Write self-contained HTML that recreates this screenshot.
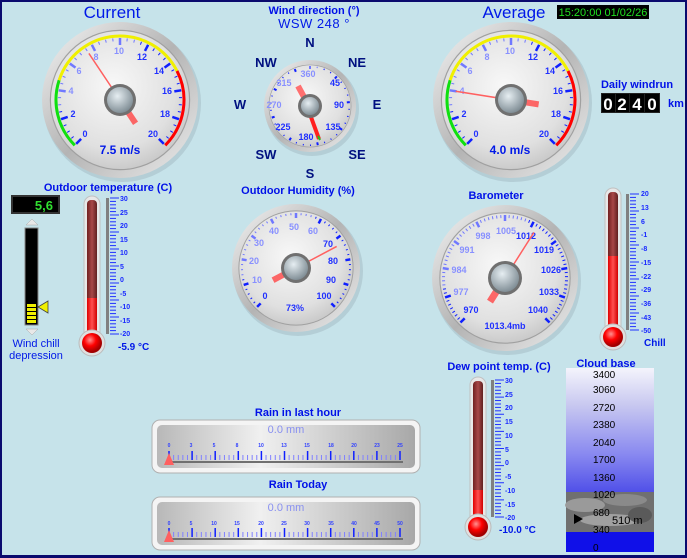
<!DOCTYPE html>
<html><head><meta charset="utf-8">
<style>
html,body{margin:0;padding:0}
body{width:687px;height:558px;overflow:hidden;background:#0a0a6e;font-family:"Liberation Sans",sans-serif}
#f{position:absolute;left:2px;top:2px;width:683px;height:553px;background:#c6e3ea}
svg{position:absolute;left:0;top:0}
.b{font-weight:bold;font-size:11px;fill:#0010e8}
.t{font-size:17px;fill:#0018e8}
.l{font-size:9px;font-weight:bold;fill:#2030ff;text-anchor:middle}
.lf{fill:#8890ff}
.s{font-size:7px;font-weight:bold;fill:#1a2aff}
.c{font-size:13px;font-weight:bold;fill:#001080;text-anchor:middle}
</style></head><body>
<div id="f"></div>
<svg width="687" height="558" viewBox="0 0 687 558" id="sv">
<defs>
<radialGradient id="face" cx="45%" cy="40%" r="65%"><stop offset="0" stop-color="#f8f8f8"/><stop offset="0.7" stop-color="#e0e0e0"/><stop offset="1" stop-color="#c4c4c4"/></radialGradient>
<linearGradient id="bez" x1="0" y1="0" x2="1" y2="1"><stop offset="0" stop-color="#f4f4f4"/><stop offset="0.5" stop-color="#b4b4b4"/><stop offset="1" stop-color="#ececec"/></linearGradient>
<radialGradient id="hub" cx="40%" cy="35%" r="70%"><stop offset="0" stop-color="#e6eef2"/><stop offset="1" stop-color="#7a8890"/></radialGradient>
<linearGradient id="tube" x1="0" x2="1"><stop offset="0" stop-color="#702020"/><stop offset="0.5" stop-color="#a84848"/><stop offset="1" stop-color="#602020"/></linearGradient>
<linearGradient id="tubef" x1="0" x2="1"><stop offset="0" stop-color="#e00000"/><stop offset="0.5" stop-color="#ff5050"/><stop offset="1" stop-color="#d00000"/></linearGradient>
<radialGradient id="bulb" cx="40%" cy="35%" r="60%"><stop offset="0" stop-color="#ff9090"/><stop offset="0.5" stop-color="#ff0000"/><stop offset="1" stop-color="#a00000"/></radialGradient>
<linearGradient id="cloud" x1="0" y1="0" x2="0" y2="1"><stop offset="0" stop-color="#f4f4fc"/><stop offset="0.3" stop-color="#c8c8f0"/><stop offset="0.7" stop-color="#8888f0"/><stop offset="1" stop-color="#5050e8"/></linearGradient>
<linearGradient id="rainf" x1="0" x2="1"><stop offset="0" stop-color="#b8b8b8"/><stop offset="0.4" stop-color="#f0f0f0"/><stop offset="1" stop-color="#a8a8a8"/></linearGradient>
</defs>
<g id="dyn"></g>

<text class="t" x="112" y="18" text-anchor="middle">Current</text>
<text class="t" x="514" y="18" text-anchor="middle">Average</text>
<rect x="557" y="5" width="92" height="14" fill="#000"/>
<text x="603" y="16" font-size="11" fill="#20e020" text-anchor="middle">15:20:00 01/02/26</text>
<text class="b" x="314" y="14" text-anchor="middle">Wind direction (°)</text>
<text x="314" y="28" font-size="13" fill="#0018e8" text-anchor="middle" letter-spacing="0.5">WSW  248 °</text>

<text class="c" x="310" y="47">N</text><text class="c" x="357" y="67">NE</text><text class="c" x="377" y="109">E</text><text class="c" x="357" y="159">SE</text>
<text class="c" x="310" y="178">S</text><text class="c" x="266" y="159">SW</text><text class="c" x="240" y="109">W</text><text class="c" x="266" y="67">NW</text>

<text class="b" x="637" y="88" text-anchor="middle">Daily windrun</text>
<rect x="601" y="93" width="59" height="20" fill="#222"/>
<g font-size="17" font-weight="bold" fill="#fff" text-anchor="middle">
<rect x="602" y="94" width="13" height="18" fill="#000"/><rect x="616" y="94" width="13" height="18" fill="#000"/><rect x="630" y="94" width="14" height="18" fill="#000"/><rect x="645" y="94" width="14" height="18" fill="#000"/>
<text x="608" y="110">0</text><text x="622" y="110">2</text><text x="637" y="110">4</text><text x="652" y="110">0</text></g>
<text class="b" x="668" y="107">km</text>

<text class="b" x="108" y="191" text-anchor="middle">Outdoor temperature (C)</text>
<text class="b" x="298" y="194" text-anchor="middle">Outdoor Humidity (%)</text>
<text class="b" x="496" y="199" text-anchor="middle">Barometer</text>
<text class="b" x="499" y="370" text-anchor="middle">Dew point temp. (C)</text>
<text class="b" x="606" y="367" text-anchor="middle">Cloud base</text>
<text class="b" x="298" y="416" text-anchor="middle">Rain in last hour</text>
<text class="b" x="298" y="488" text-anchor="middle">Rain Today</text>

<rect x="11" y="195" width="49" height="19" fill="#333"/><rect x="13" y="197" width="45" height="15" fill="#000"/>
<text x="53" y="210" font-size="13" font-weight="bold" fill="#30e030" text-anchor="end">5,6</text>
<polygon points="26,225 38,225 32,219" fill="#e8e8e8" stroke="#aaa" stroke-width="0.5"/>
<rect x="25" y="228" width="13" height="97" fill="#000" stroke="#888"/>
<g fill="#f0f000"><rect x="27" y="304" width="9" height="3"/><rect x="27" y="308" width="9" height="3"/><rect x="27" y="312" width="9" height="3"/><rect x="27" y="316" width="9" height="3"/><rect x="27" y="320" width="9" height="3"/></g>
<polygon points="38,307 48,301 48,313" fill="#f0f000" stroke="#444" stroke-width="0.8"/>
<polygon points="26,329 38,329 32,335" fill="#e8e8e8" stroke="#aaa" stroke-width="0.5"/>
<text x="36" y="347" font-size="11" fill="#0018e8" text-anchor="middle">Wind chill</text>
<text x="36" y="359" font-size="11" fill="#0018e8" text-anchor="middle">depression</text>

<text x="118" y="350" font-size="10" font-weight="bold" fill="#0018e8">-5.9 °C</text>
<text x="499" y="533" font-size="10" font-weight="bold" fill="#0018e8">-10.0 °C</text>
<text x="644" y="346" font-size="10" font-weight="bold" fill="#0018e8">Chill</text>

<rect x="566" y="368" width="88" height="124" fill="url(#cloud)"/>
<rect x="566" y="492" width="88" height="40" fill="#707070"/>
<ellipse cx="585" cy="505" rx="20" ry="7" fill="#9a9a9a"/><ellipse cx="625" cy="500" rx="22" ry="6" fill="#8a8a8a"/><ellipse cx="610" cy="520" rx="30" ry="6" fill="#a0a0a0"/><ellipse cx="640" cy="515" rx="12" ry="8" fill="#5a5a5a"/>
<rect x="566" y="532" width="88" height="20" fill="#1010e8"/>
<g font-size="10" fill="#000">
<text x="593" y="378">3400</text><text x="593" y="393">3060</text><text x="593" y="411">2720</text><text x="593" y="428">2380</text><text x="593" y="446">2040</text><text x="593" y="463">1700</text><text x="593" y="481">1360</text><text x="593" y="498">1020</text><text x="593" y="516">680</text><text x="593" y="533">340</text><text x="593" y="551">0</text>
<text x="612" y="524" font-size="11">510 m</text></g>
<polygon points="574,514 583,519 574,524" fill="#000"/>

<g id="rainbars"></g>
<text x="286" y="433" font-size="11" fill="#8890f0" text-anchor="middle">0.0 mm</text>
<text x="286" y="511" font-size="11" fill="#8890f0" text-anchor="middle">0.0 mm</text>
<g font-size="5" fill="#3040ff" font-weight="bold" text-anchor="middle">
<text x="169" y="447">0</text><text x="191" y="447">3</text><text x="214" y="447">5</text><text x="237" y="447">8</text><text x="261" y="447">10</text><text x="284" y="447">13</text><text x="307" y="447">15</text><text x="331" y="447">18</text><text x="354" y="447">20</text><text x="377" y="447">23</text><text x="400" y="447">25</text>
<text x="169" y="525">0</text><text x="191" y="525">5</text><text x="214" y="525">10</text><text x="237" y="525">15</text><text x="261" y="525">20</text><text x="284" y="525">25</text><text x="307" y="525">30</text><text x="331" y="525">35</text><text x="354" y="525">40</text><text x="377" y="525">45</text><text x="400" y="525">50</text></g>

<g class="l" font-size="10">
<text x="85" y="137">0</text><text x="73" y="117">2</text><text x="71" y="94" class="l lf">4</text><text x="79" y="74" class="l lf">6</text><text x="96" y="60" class="l lf">8</text><text x="119" y="54" class="l lf">10</text><text x="142" y="60">12</text><text x="159" y="74">14</text><text x="167" y="94">16</text><text x="165" y="117">18</text><text x="153" y="137">20</text>
<text x="476" y="137">0</text><text x="464" y="117">2</text><text x="462" y="94" class="l lf">4</text><text x="470" y="74" class="l lf">6</text><text x="487" y="60" class="l lf">8</text><text x="510" y="54" class="l lf">10</text><text x="533" y="60">12</text><text x="550" y="74">14</text><text x="558" y="94">16</text><text x="556" y="117">18</text><text x="544" y="137">20</text>
</g>
<text x="120" y="154" font-size="12" font-weight="bold" fill="#0018e8" text-anchor="middle">7.5 m/s</text>
<text x="510" y="154" font-size="12" font-weight="bold" fill="#0018e8" text-anchor="middle">4.0 m/s</text>
<g class="l" font-size="8">
<text x="308" y="77" class="l lf">360</text><text x="335" y="86">45</text><text x="339" y="108">90</text><text x="333" y="130">135</text><text x="306" y="140">180</text><text x="283" y="130">225</text><text x="274" y="108" class="l lf">270</text><text x="284" y="86" class="l lf">315</text>
</g>
<g class="l" font-size="8">
<text x="265" y="299">0</text><text x="257" y="283" class="l lf">10</text><text x="254" y="264" class="l lf">20</text><text x="259" y="246" class="l lf">30</text><text x="274" y="234" class="l lf">40</text><text x="294" y="230" class="l lf">50</text><text x="313" y="234" class="l lf">60</text><text x="328" y="247">70</text><text x="333" y="264">80</text><text x="331" y="283">90</text><text x="324" y="299">100</text>
<text x="295" y="311">73%</text>
</g>
<g class="l" font-size="8">
<text x="471" y="313">970</text><text x="461" y="295" class="l lf">977</text><text x="459" y="273" class="l lf">984</text><text x="467" y="253" class="l lf">991</text><text x="483" y="239" class="l lf">998</text><text x="506" y="234" class="l lf">1005</text><text x="526" y="239">1012</text><text x="544" y="253">1019</text><text x="551" y="273">1026</text><text x="549" y="295">1033</text><text x="538" y="313">1040</text>
<text x="505" y="329">1013.4mb</text>
</g>
<g class="s">
<text x="120" y="201">30</text><text x="120" y="215">25</text><text x="120" y="228">20</text><text x="120" y="242">15</text><text x="120" y="255">10</text><text x="120" y="269">5</text><text x="120" y="282">0</text><text x="120" y="296">-5</text><text x="120" y="309">-10</text><text x="120" y="323">-15</text><text x="120" y="336">-20</text>
<text x="641" y="196">20</text><text x="641" y="210">13</text><text x="641" y="224">6</text><text x="641" y="237">-1</text><text x="641" y="251">-8</text><text x="641" y="265">-15</text><text x="641" y="279">-22</text><text x="641" y="292">-29</text><text x="641" y="306">-36</text><text x="641" y="320">-43</text><text x="641" y="333">-50</text>
<text x="505" y="383">30</text><text x="505" y="397">25</text><text x="505" y="410">20</text><text x="505" y="424">15</text><text x="505" y="438">10</text><text x="505" y="452">5</text><text x="505" y="465">0</text><text x="505" y="479">-5</text><text x="505" y="493">-10</text><text x="505" y="507">-15</text><text x="505" y="520">-20</text>
</g>
<g id="top"></g>
</svg>
<script>
var NS="http://www.w3.org/2000/svg",D=document.getElementById("dyn"),T=document.getElementById("top"),R=document.getElementById("rainbars");
function el(p,n,a){var e=document.createElementNS(NS,n);for(var k in a)e.setAttribute(k,a[k]);p.appendChild(e);return e;}
function pt(cx,cy,r,a){a=a*Math.PI/180;return [cx+r*Math.sin(a),cy-r*Math.cos(a)];}
function arc(cx,cy,r,a1,a2){var p=pt(cx,cy,r,a1),q=pt(cx,cy,r,a2);return "M"+p[0]+" "+p[1]+"A"+r+" "+r+" 0 "+((a2-a1)>180?1:0)+" 1 "+q[0]+" "+q[1];}
function bezel(cx,cy,r){
 el(D,"circle",{cx:cx+2,cy:cy+3,r:r+1,fill:"#a8c0c8",opacity:0.6});
 el(D,"circle",{cx:cx,cy:cy,r:r,fill:"url(#bez)"});
 el(D,"circle",{cx:cx,cy:cy,r:r*0.9,fill:"#a0a0a0"});
 el(D,"circle",{cx:cx,cy:cy,r:r*0.885,fill:"url(#face)"});}
function ticks(cx,cy,r1,n,a0,sw,majEvery,majLen,minLen,col,mw){
 for(var i=0;i<=n;i++){var a=a0+sw*i/n,maj=i%majEvery==0;var p=pt(cx,cy,r1,a),q=pt(cx,cy,r1-(maj?majLen:minLen),a);
 var c=(a>-100&&a<20)?"#7078ff":col;
 el(D,"line",{x1:p[0],y1:p[1],x2:q[0],y2:q[1],stroke:c,"stroke-width":maj?(mw||2.5):1});}}
function hub(cx,cy,r){el(T,"circle",{cx:cx,cy:cy,r:r+3,fill:"#707070"});el(T,"circle",{cx:cx,cy:cy,r:r,fill:"url(#hub)"});}
function needle(cx,cy,a,len,tail,w){var p=pt(cx,cy,len,a),q=pt(cx,cy,tail,a+180);
 el(T,"line",{x1:cx,y1:cy,x2:p[0],y2:p[1],stroke:"#ff6060","stroke-width":1.5});
 el(T,"line",{x1:cx,y1:cy,x2:q[0],y2:q[1],stroke:"#ff5050","stroke-width":w,opacity:0.85});}
[[120,100,7.5],[511,100,4.0]].forEach(function(g){var cx=g[0],cy=g[1];bezel(cx,cy,78);
 el(D,"path",{d:arc(cx,cy,64,-135,-72),stroke:"#10e010","stroke-width":3,fill:"none"});
 el(D,"path",{d:arc(cx,cy,64,-72,63),stroke:"#f0f000","stroke-width":3,fill:"none"});
 el(D,"path",{d:arc(cx,cy,64,63,135),stroke:"#ff0000","stroke-width":3,fill:"none"});
 ticks(cx,cy,62,40,-135,270,4,7,3,"#1020ff");
 needle(cx,cy,-135+g[2]*13.5,56,28,6);hub(cx,cy,13);});
bezel(310,106,46);ticks(310,106,40,32,0,337.5,4,3,1.5,"#1020ff",2);
el(T,"line",{x1:303,y1:95,x2:319,y2:139,stroke:"#ff2020","stroke-width":4});
el(T,"line",{x1:318,y1:136,x2:320,y2:140,stroke:"#20c020","stroke-width":2});
el(T,"line",{x1:298,y1:86,x2:304,y2:97,stroke:"#ff7070","stroke-width":6});
hub(310,106,9);
bezel(296,268,64);ticks(296,268,55,50,-135,270,5,5,2,"#1020ff",2.5);needle(296,268,-135+73*2.7,46,26,6);hub(296,268,12);
bezel(505,278,73);ticks(505,278,63,70,-135,270,7,6,3,"#1020ff",2.5);needle(505,278,-135+(1013.4-970)/70*270,54,28,7);hub(505,278,14);
function thermo(x,y1,y2,fy,sx,sy1,sy2,n){
 el(D,"rect",{x:x-8,y:y1-4,width:16,height:y2-y1+14,rx:8,fill:"#e8e8e8",stroke:"#c0c0c0"});
 el(D,"rect",{x:x-5,y:y1,width:10,height:y2-y1,rx:4,fill:"url(#tube)"});
 el(D,"rect",{x:x-5,y:fy,width:10,height:y2-fy+4,fill:"url(#tubef)"});
 el(D,"circle",{cx:x,cy:y2+12,r:13,fill:"#e0e0e0",stroke:"#bbb"});
 el(D,"circle",{cx:x,cy:y2+12,r:10,fill:"url(#bulb)"});
 el(D,"rect",{x:sx-4,y:sy1,width:3,height:sy2-sy1,fill:"#808080"});
 for(var i=0;i<=n;i++){var y=sy1+(sy2-sy1)*i/n,maj=i%5==0;el(D,"line",{x1:sx,y1:y,x2:sx+(maj?9:6),y2:y,stroke:"#2030ff","stroke-width":1});}}
thermo(92,200,331,298,110,198,334,40);
thermo(613,192,325,256,630,194,330,40);
thermo(478,381,515,490,495,380,517,40);
for(var i=0;i<=40;i++){var y=374+(548-374)*i/40,maj=i%4==0;el(D,"line",{x1:576,y1:y,x2:maj?589:583,y2:y,stroke:"#000","stroke-width":1});}
el(D,"line",{x1:576,y1:374,x2:576,y2:548,stroke:"#000"});
[420,497].forEach(function(y){
 el(R,"rect",{x:152,y:y,width:268,height:53,rx:8,fill:"#f4f4f4",stroke:"#b0b0b0"});
 el(R,"rect",{x:157,y:y+5,width:258,height:43,rx:5,fill:"url(#rainf)"});
 el(R,"rect",{x:168,y:y+41,width:235,height:2,fill:"#707070"});
 for(var i=0;i<=50;i++){var x=169+231*i/50,maj=i%5==0;el(R,"line",{x1:x,y1:y+40,x2:x,y2:y+(maj?31:35),stroke:maj?"#1020ff":"#8080ff","stroke-width":maj?1.5:1});}
 el(R,"polygon",{points:(164)+","+(y+45)+" "+(174)+","+(y+45)+" "+(169)+","+(y+33),fill:"#ff6060"});});
</script>
</body></html>
